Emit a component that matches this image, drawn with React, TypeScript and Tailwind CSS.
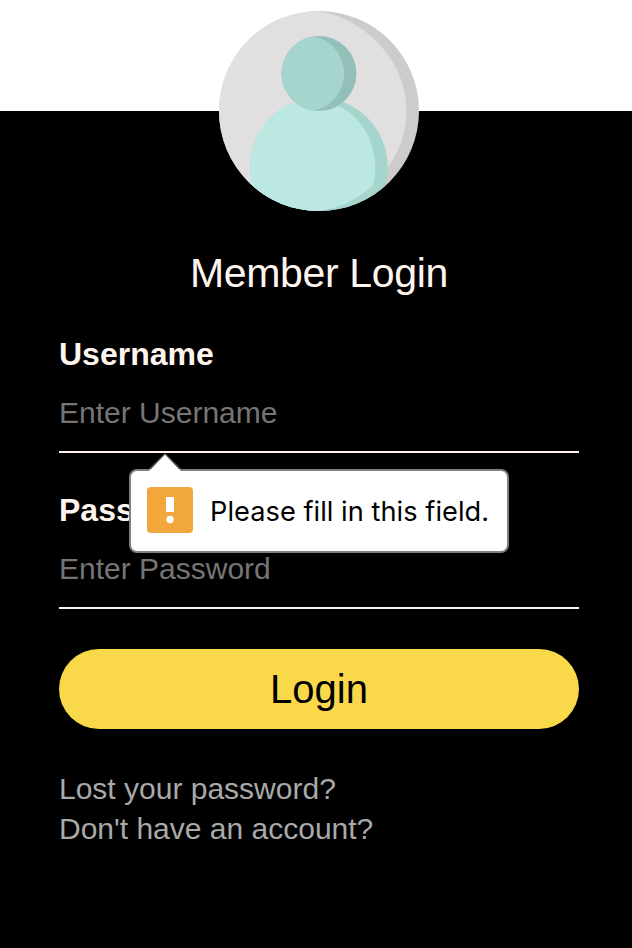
import React from "react";

function Avatar() {
  return (
    <svg viewBox="0 0 200 200" className="block h-[200px] w-[200px] shrink-0">
      <defs>
        <clipPath id="disc">
          <circle cx="100" cy="100" r="100" />
        </clipPath>
        <clipPath id="head">
          <circle cx="100" cy="62.5" r="37.5" />
        </clipPath>
        <clipPath id="body">
          <path d="M31.3 155.500C31.3 117.500 62 86.700 100 86.700s68.700 30.800 68.700 68.800c0 6.500-.7 12.500-1.900 18V200H33.200V173.500c-1.200-5.500-1.900-11.500-1.900-18Z" />
        </clipPath>
      </defs>
      <g clipPath="url(#disc)">
        <rect width="200" height="200" fill="#cdcbcc" />
        <path d="M96 0C144 5 187.500 49 187.500 100S144 195 96 200H0V0Z" fill="#e1dfe0" />
        <g clipPath="url(#body)">
          <rect width="200" height="200" fill="#a5d5cd" />
          <path d="M93.700 86.900C129 90 156.200 119.500 156.200 155.500c0 7-.6 13-1.900 18.500C139 188 121 197 100 200H0V86.900Z" fill="#bbe9e2" />
        </g>
        <circle cx="100" cy="62.500" r="37.500" fill="#92c0b8" />
        <path
          clipPath="url(#head)"
          d="M93.700 25.300C111 28 125 43.500 125 62.500S111 97 93.700 99.700H50V25Z"
          fill="#a5d5cd"
        />
      </g>
    </svg>
  );
}

function ValidationBubble() {
  return (
    <div className="absolute top-[134px] left-[70px] z-10 h-[84px] w-[380px]">
      <div className="flex h-full items-start rounded-[8px] border-2 border-[#808080] bg-white pt-4 pl-4">
        <div className="h-[46px] w-[46px] shrink-0 rounded-[4px] bg-[#f2a73d]">
          <svg viewBox="0 0 46 46" className="h-[46px] w-[46px]">
            <path d="M19 10h8v15h-8Z" fill="#fff" />
            <circle cx="23" cy="32.500" r="3.700" fill="#fff" />
          </svg>
        </div>
        <span className="ml-[17px] pt-px font-['Inter',sans-serif] text-[27.2px] leading-[48px] tracking-[0.04px] whitespace-nowrap text-black">
          Please fill in this field.
        </span>
      </div>
      <svg viewBox="0 0 36 19" className="absolute -top-[16px] left-[18px] h-[19px] w-[36px]">
        <path d="M2 18L18 1.500L34 18V19H2Z" fill="#fff" />
        <path d="M1.500 17L18 .700L34.500 17" fill="none" stroke="#808080" strokeWidth="1" />
      </svg>
    </div>
  );
}

function Field({ label, placeholder, type }: { label: string; placeholder: string; type: string }) {
  return (
    <div className="mb-5 flex h-[136px] flex-col">
      <label className="pt-px text-[32px] leading-[36px] font-bold text-[#fff5ee]">{label}</label>
      <input
        type={type}
        placeholder={placeholder}
        className="mt-px h-[80px] w-full border-b-2 border-[#fff5ee] bg-transparent p-0 pt-[2px] text-[30px] text-white outline-none placeholder:text-[#757575]"
      />
    </div>
  );
}

export default function App() {
  return (
    <main className="h-[948px] w-full overflow-hidden bg-white pt-[111px] font-['Liberation_Sans',Arial,sans-serif]">
      <section className="flex h-[837px] w-full flex-col bg-black pl-[59px]">
        <div className="-mt-[100px] flex w-[520px] justify-center">
          <Avatar />
        </div>
        <h1 className="mt-[38px] w-[520px] text-center text-[41px] leading-[48px] tracking-[-0.35px] text-[#fff5ee]">Member Login</h1>
        <form className="relative mt-[38px] w-[520px]">
          <Field label="Username" placeholder="Enter Username" type="text" />
          <Field label="Password" placeholder="Enter Password" type="password" />
          <ValidationBubble />
          <button type="button" className="mt-[22px] block h-[80px] w-full rounded-full bg-[#f9d94a] text-[40px] text-black">
            Login
          </button>
          <div className="mt-10 flex flex-col items-start text-[30px] leading-[40px] text-[#a9a9a9]">
            <a>Lost your password?</a>
            <a>Don't have an account?</a>
          </div>
        </form>
      </section>
    </main>
  );
}
